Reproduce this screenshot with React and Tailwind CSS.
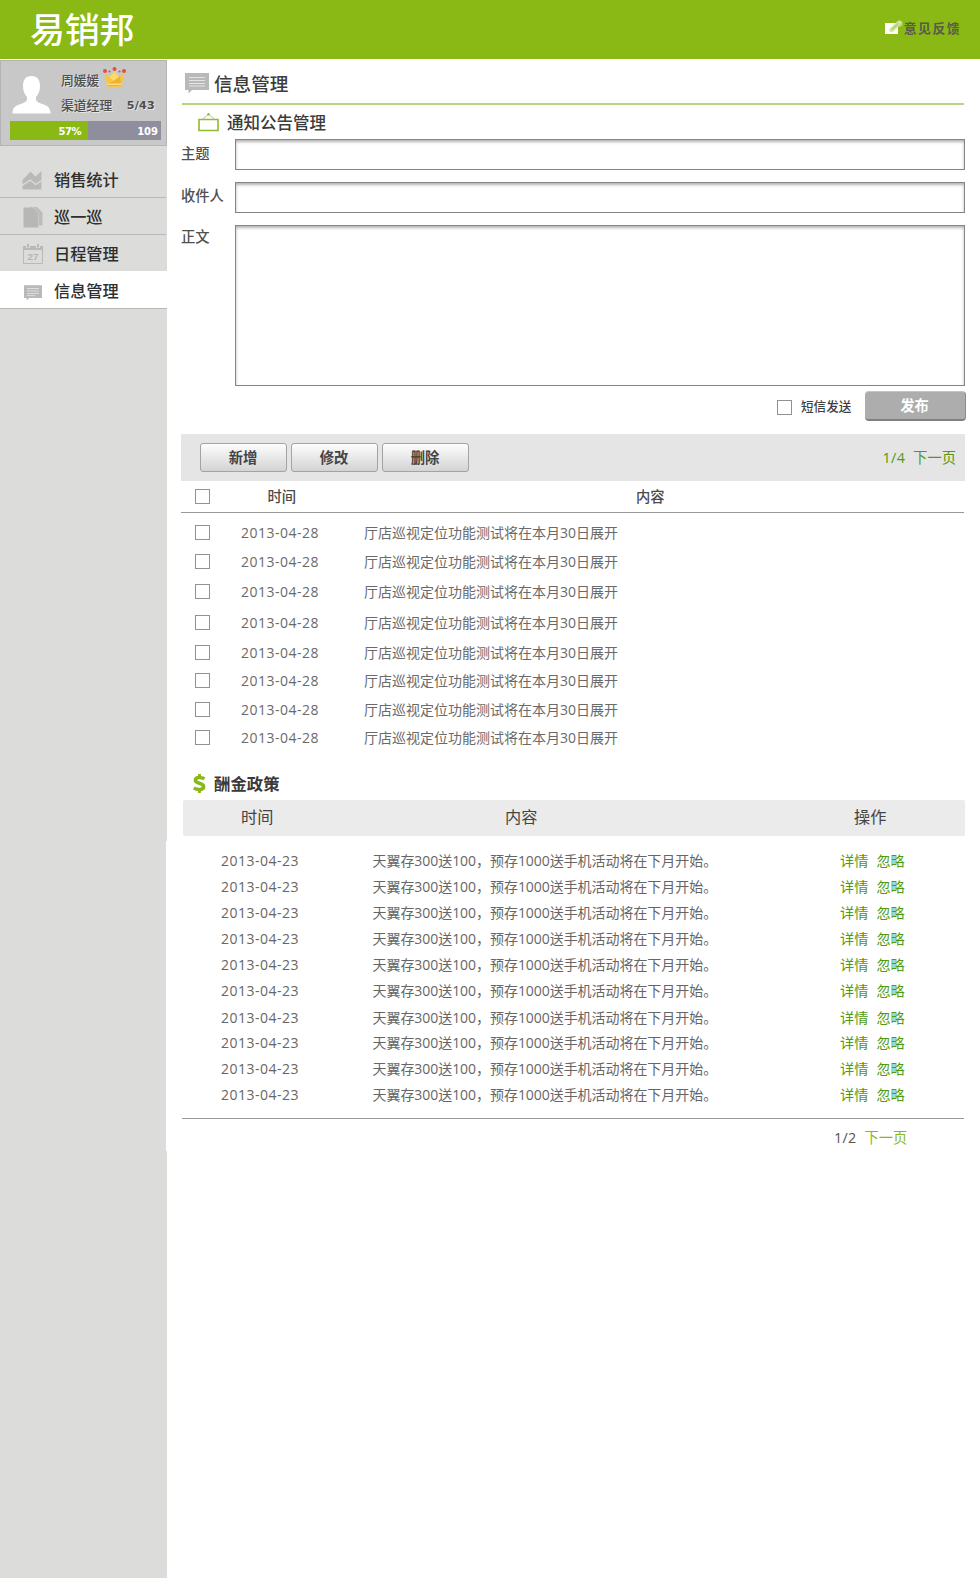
import React from "react";

const notices = [
  ["h-[29px]", "2013-04-28"],
  ["h-[30px]", "2013-04-28"],
  ["h-[31px]", "2013-04-28"],
  ["h-[30px]", "2013-04-28"],
  ["h-[28px]", "2013-04-28"],
  ["h-[29px]", "2013-04-28"],
  ["h-[28px]", "2013-04-28"],
  ["h-[28px]", "2013-04-28"],
];

const policies = [
  "h-[26px]",
  "h-[26px]",
  "h-[26px]",
  "h-[26px]",
  "h-[26px]",
  "h-[27px]",
  "h-[25px]",
  "h-[26px]",
  "h-[26px]",
  "h-[26px]",
];

function Box() {
  return <span className="block h-[15px] w-[15px] shrink-0 border border-[#929292] bg-white" />;
}

function MessageIcon({ className, lines }) {
  return (
    <svg className={className} viewBox="0 0 24 21">
      <path d="M0 0H24V17H7L3.5 20.5V17H0Z" fill="#b9b9b9" />
      <path d={lines} stroke="#e4e4e4" strokeWidth="1.2" />
    </svg>
  );
}

function ChartIcon() {
  return (
    <svg className="h-[19px] w-5" viewBox="0 0 20 19">
      <path d="M0.500 9L8.500 0.500L13.500 5.500L19.500 0V18.500H0.500Z" fill="#b9b9b9" />
      <path d="M0 14.500L8.500 9L13.500 13.500L20 9.500" fill="none" stroke="#dcdcda" strokeWidth="1.300" />
    </svg>
  );
}

function PagesIcon() {
  return (
    <svg className="h-[21px] w-5" viewBox="0 0 20 21">
      <path d="M7 0H14L19.500 5.500V18.500H7Z" fill="#bcbcbc" />
      <path d="M0.500 0.500H10L15.500 6.500V20.500H0.500Z" fill="#b7b7b7" />
      <path d="M9 0.500H10.500L15.500 6.500V19" fill="none" stroke="#d0d0ce" strokeWidth="0.700" />
    </svg>
  );
}

function CalendarIcon() {
  return (
    <svg className="h-5 w-5" viewBox="0 0 20 20">
      <path d="M0.500 2.500H19.500V19.500H0.500Z" fill="none" stroke="#b9b9b9" />
      <path d="M0 2H20V6H0Z" fill="#b9b9b9" />
      <path d="M3 0H7V4H3ZM13 0H17V4H13Z" fill="#dcdcda" />
      <path d="M4 0H6V3.500H4ZM14 0H16V3.500H14Z" fill="#b9b9b9" />
      <text x="10" y="15.500" textAnchor="middle" fontSize="8.500" fontWeight="700" fontFamily="Liberation Sans, sans-serif" fill="#b4b4b4" textLength="11" lengthAdjust="spacingAndGlyphs">27</text>
    </svg>
  );
}

function NavItem({ icon, label, className }) {
  return (
    <div className={className}>
      <span className="flex w-[54px] shrink-0 pl-[22px]">{icon}</span>
      <span className="text-[16.200px] leading-6 font-medium text-[#2e2e2e]">{label}</span>
    </div>
  );
}

function Sidebar() {
  return (
    <aside className="w-[167px] shrink-0 pt-px">
      <div className="h-[86px] border border-[#b4b4b4] bg-[#c8c8c8] pl-[9px]">
        <div className="flex h-[60px]">
          <svg className="mt-[15px] ml-[2px] h-[38px] w-[39px] shrink-0" viewBox="0 0 39 38">
            <path d="M19.500 0C25.500 0 28 4 28 10C28 15 26.500 18 24 21C23.500 25 25 26 29 27.500C35 29.500 38.500 31 38.500 37.500H0.500C0.500 31 4 29.500 10 27.500C14 26 15.500 25 15 21C12.500 18 11 15 11 10C11 4 13.500 0 19.500 0Z" fill="#fff" />
          </svg>
          <div className="ml-[10px] w-[94px] text-[12.800px] font-medium text-[#4e4e4e] [text-shadow:1px_1px_0_#e6e6e6]">
            <div className="flex h-[31px] items-start pt-[6px]">
              <span className="pt-[4px] leading-[18px]">周媛媛</span>
              <svg className="ml-[4px] h-[21px] w-[23px]" viewBox="0 0 23 21">
                <path d="M1.500 6L7 10L11.500 5L16 10L21.500 6L18.500 20H4.500Z" fill="#f8c545" />
                <path d="M5 17L17 9L18.500 19H4.700Z" fill="#eeb235" />
                <path d="M11.500 5L16 10L10 14L7 10Z" fill="#fddb68" />
                <path d="M4.300 17.200H18.800" stroke="#fff0b0" strokeWidth="1" />
                <circle cx="2" cy="4" r="2" fill="#e2513d" />
                <circle cx="11.500" cy="2" r="2" fill="#e2513d" />
                <circle cx="21" cy="4" r="2" fill="#e2513d" />
                <circle cx="6.500" cy="4.500" r="1.100" fill="#e2513d" />
                <circle cx="16.500" cy="4.500" r="1.100" fill="#e2513d" />
              </svg>
            </div>
            <div className="flex justify-between pt-[4px] leading-[18px]">
              <span>渠道经理</span>
              <span className="font-['DejaVu_Sans',sans-serif] text-[11px] leading-[20px] font-bold tracking-[0.300px]">5/43</span>
            </div>
          </div>
        </div>
        <div className="flex h-[19px] w-[151px] text-right font-['DejaVu_Sans',sans-serif] text-[10px] leading-[22px] font-bold text-white">
          <div className="w-[78px] bg-[#8ab814] pr-[7px] tracking-[-0.500px]">57%</div>
          <div className="flex-1 bg-[#8f8e9d] pr-[3px]">109</div>
        </div>
      </div>
      <nav className="h-[695px] bg-[#dcdcda] pt-[17px]">
        <NavItem icon={<ChartIcon />} label="销售统计" className="flex h-[35px] w-[166px] items-center border-b border-[#b8b8b8]" />
        <NavItem icon={<span className="pl-px"><PagesIcon /></span>} label="巡一巡" className="flex h-[37px] w-[166px] items-center border-b border-[#b8b8b8] pt-[2px]" />
        <NavItem icon={<span className="pl-px"><CalendarIcon /></span>} label="日程管理" className="flex h-9 items-center pt-[1px]" />
        <NavItem
          icon={<span className="pt-[5px] pl-[2px]"><MessageIcon className="h-4 w-[18px]" lines="M4 4.500H20M4 7.800H20M4 11.100H20M4 14H15" /></span>}
          label="信息管理"
          className="flex h-[38px] items-center border-b border-[#b8b8b8] bg-white pt-[2px]"
        />
      </nav>
      <div className="h-[310px] w-[166px] bg-[#dcdcda]" />
      <div className="h-[427px] bg-[#dcdcda]" />
    </aside>
  );
}

function Field({ label, fieldClass, labelClass }) {
  return (
    <label className="flex items-start">
      <span className={labelClass}>{label}</span>
      <span className={fieldClass} />
    </label>
  );
}

const fieldBase = "h-[31px] w-[730px] border border-[#868686] bg-white shadow-[inset_0_2px_3px_rgba(0,0,0,0.300)]";
const areaBase = "h-[161px] w-[730px] border border-[#868686] bg-white shadow-[inset_0_2px_3px_rgba(0,0,0,0.300)]";
const toolButton = "h-[29px] w-[87px] rounded-[3px] border border-[#a3a3a3] bg-gradient-to-b from-[#fdfdfd] to-[#d4d4d4] pr-px text-center text-[14.300px] leading-[28px] font-bold text-[#444]";

function Announcements() {
  return (
    <section>
      <div className="flex h-[34px] pl-[17px]">
        <svg className="mt-2 h-[19px] w-[21px]" viewBox="0 0 21 19">
          <path d="M1 6.500H20V17.500H1Z" fill="none" stroke="#8fba35" strokeWidth="1.600" />
          <path d="M4.500 6L10.500 1.500L16.500 6" fill="none" stroke="#a9c96a" strokeWidth="0.900" />
          <circle cx="10.500" cy="1.300" r="1.200" fill="#8fba35" />
        </svg>
        <h2 className="pt-[6px] pl-[8px] text-[16.500px] leading-6 font-medium text-[#3c3c3c]">通知公告管理</h2>
      </div>
      <div className="flex flex-col gap-3 text-[14.300px] leading-5 font-medium text-[#505050]">
        <Field label="主题" labelClass="w-[54px] pt-[5px]" fieldClass={fieldBase} />
        <Field label="收件人" labelClass="w-[54px] pt-[4px]" fieldClass={fieldBase} />
        <Field label="正文" labelClass="w-[54px] pt-[2px]" fieldClass={areaBase} />
      </div>
      <div className="flex h-12 items-start pt-[5px] pl-[596px]">
        <div className="flex h-[30px] w-[88px] items-center gap-[9px] pt-[2px]">
          <Box />
          <span className="text-[12.600px] font-medium whitespace-nowrap text-[#3f3f3f]">短信发送</span>
        </div>
        <button className="h-[30px] w-[101px] rounded-[4px] border-t border-r border-b-2 border-t-[#c4c4c4] border-r-[#8c8c8c] border-b-[#7f7f7f] bg-[#adadad] pr-px text-[14.300px] leading-[28px] font-bold text-white">发布</button>
      </div>

      <div className="flex h-[47px] w-[784px] items-center bg-[#e5e5e5] pl-[19px]">
        <div className="flex flex-1 gap-1">
          <button className={toolButton}>新增</button>
          <button className={toolButton}>修改</button>
          <button className={toolButton}>删除</button>
        </div>
        <div className="flex gap-[8px] pr-[9px] text-[14.300px] text-[#519a12]">
          <span className="tracking-[0.300px]">1/4</span>
          <span>下一页</span>
        </div>
      </div>
      <div className="flex h-8 w-[783px] items-center border-b border-[#999] pl-[14px] text-[14.300px] font-medium text-[#4a4a4a]">
        <span className="pb-px"><Box /></span>
        <span className="w-[426px] pl-[57.500px]">时间</span>
        <span>内容</span>
      </div>
      <div className="h-[249px] pt-3 pl-[14px] text-[14px] text-[#6a6a6a]">
        {notices.map(([height, date], i) => (
          <div key={i} className={height}>
            <div className="flex h-[15px] items-center">
              <Box />
              <span className="w-[154px] pl-[31px] tracking-[0.500px]">{date}</span>
              <span className="whitespace-nowrap">厅店巡视定位功能测试将在本月30日展开</span>
            </div>
          </div>
        ))}
      </div>
    </section>
  );
}

function Policies() {
  return (
    <section>
      <div className="flex h-[38px] items-start pl-3">
        <svg className="mt-[12px] h-[19px] w-[13px]" viewBox="0 0 13 19">
          <path d="M11.500 4.800C9.500 3.600 7.800 3.500 6 3.500C3.800 3.500 2.400 4.500 2.400 6.200C2.400 10 10.600 8.300 10.600 12.500C10.600 14.500 8.900 15.500 6.200 15.500C4.200 15.500 2.500 15 0.800 13.900" fill="none" stroke="#8ab814" strokeWidth="3.600" />
          <path d="M6.500 0V3M6.500 16V19" stroke="#8ab814" strokeWidth="2.800" />
        </svg>
        <h2 className="pt-[10px] pl-2 text-[16.400px] leading-6 font-bold text-[#3a3a3a]">酬金政策</h2>
      </div>
      <div className="ml-[2px] flex h-9 w-[782px] items-center rounded-[2px] bg-[#ebebeb] pb-[2px] text-[16.200px] text-[#444]">
        <span className="w-[322px] pl-[58px]">时间</span>
        <span className="w-[349px]">内容</span>
        <span>操作</span>
      </div>
      <div className="ml-px h-[283px] w-[782px] border-b border-[#999] pt-[12px] pl-[39px] text-[14px] text-[#666]">
        {policies.map((height, i) => (
          <div key={i} className={height}>
            <div className="flex h-[26px] items-center">
              <span className="w-[151.500px] pb-[2px] tracking-[0.500px]">2013-04-23</span>
              <span className="w-[467.500px] pb-[2px] tracking-[-0.050px] whitespace-nowrap">天翼存300送100，预存1000送手机活动将在下月开始。</span>
              <span className="flex gap-2 text-[14.200px] text-[#519a12]">
                <span>详情</span>
                <span>忽略</span>
              </span>
            </div>
          </div>
        ))}
      </div>
      <div className="flex h-[38px] items-center gap-[8px] pl-[653px] text-[14.300px] text-[#555]">
        <span className="tracking-[0.300px]">1/2</span>
        <span className="text-[#8ab814]">下一页</span>
      </div>
    </section>
  );
}

export default function App() {
  return (
    <div className="h-[1595px] w-[980px] overflow-hidden bg-white font-['Open_Sans','Noto_Sans_CJK_SC',sans-serif]">
      <header className="flex h-[59px] items-start justify-between bg-[#8ab814] pr-[19px] pl-[30px]">
        <h1 className="pt-[5px] text-[35px] leading-[50px] font-medium tracking-[-0.200px] text-white">易销邦</h1>
        <div className="flex items-start pt-[20px]">
          <svg className="h-[15px] w-[19px]" viewBox="0 0 19 15">
            <path d="M0 3H13V14H0Z" fill="#fff" />
            <path d="M6.500 10L14 3" stroke="#d3e6a8" strokeWidth="4.500" strokeLinecap="round" />
            <path d="M7 9.500L13.500 3.500" stroke="#aacd5c" strokeWidth="1.500" />
            <circle cx="14.500" cy="3.500" r="2.500" fill="none" stroke="#c2dc87" strokeWidth="1.200" />
          </svg>
          <span className="text-[12.800px] leading-4 font-bold tracking-[1.500px] text-[#575a4c]">意见反馈</span>
        </div>
      </header>
      <div className="flex">
        <Sidebar />
        <main className="w-[813px] pl-[14px]">
          <div className="ml-px flex h-[46px] w-[782px] items-start border-b-2 border-[#b6d67b] pl-[3px]">
            <MessageIcon className="mt-[14px] h-[21px] w-6" lines="M4 4.500H20M4 7.500H20M4 10.500H20M4 13H20" />
            <h1 className="pt-[11px] pl-[5px] text-[18.600px] leading-7 font-medium text-[#3c3c3c]">信息管理</h1>
          </div>
          <Announcements />
          <Policies />
        </main>
      </div>
    </div>
  );
}
